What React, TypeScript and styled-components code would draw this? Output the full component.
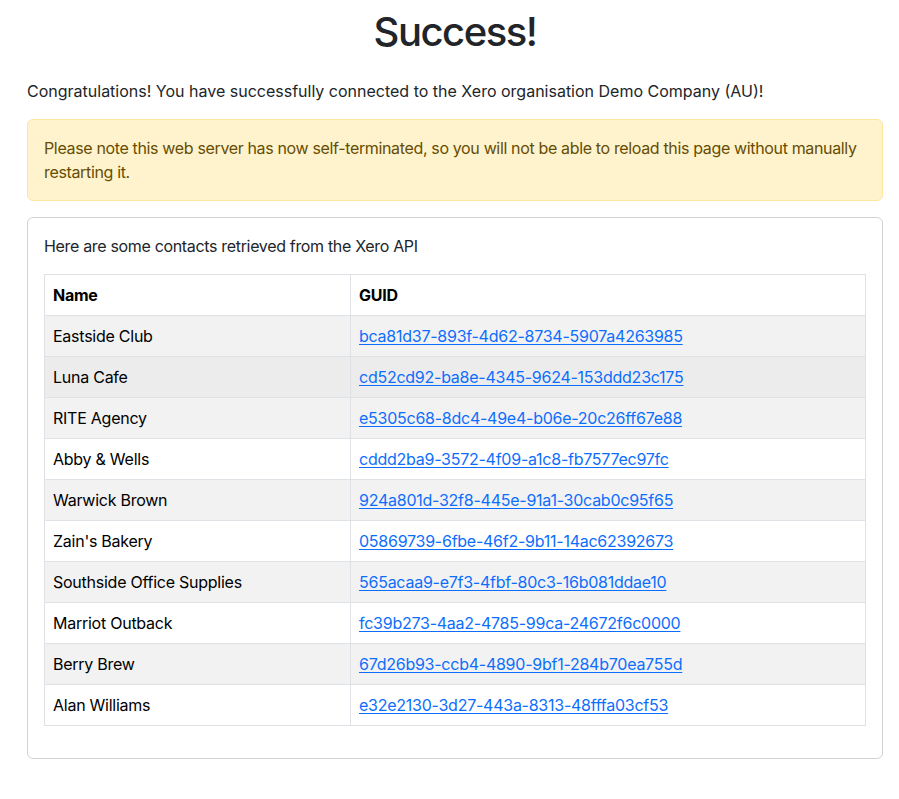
import React from 'react'
import styled, { createGlobalStyle } from 'styled-components'

interface Contact {
  name: string
  guid: string
}

const contacts: Contact[] = [
  { name: 'Eastside Club', guid: 'bca81d37-893f-4d62-8734-5907a4263985' },
  { name: 'Luna Cafe', guid: 'cd52cd92-ba8e-4345-9624-153ddd23c175' },
  { name: 'RITE Agency', guid: 'e5305c68-8dc4-49e4-b06e-20c26ff67e88' },
  { name: 'Abby & Wells', guid: 'cddd2ba9-3572-4f09-a1c8-fb7577ec97fc' },
  { name: 'Warwick Brown', guid: '924a801d-32f8-445e-91a1-30cab0c95f65' },
  { name: "Zain's Bakery", guid: '05869739-6fbe-46f2-9b11-14ac62392673' },
  { name: 'Southside Office Supplies', guid: '565acaa9-e7f3-4fbf-80c3-16b081ddae10' },
  { name: 'Marriot Outback', guid: 'fc39b273-4aa2-4785-99ca-24672f6c0000' },
  { name: 'Berry Brew', guid: '67d26b93-ccb4-4890-9bf1-284b70ea755d' },
  { name: 'Alan Williams', guid: 'e32e2130-3d27-443a-8313-48fffa03cf53' }
]

// the row under the mouse in the screenshot
const HOVERED = 1

const GlobalStyle = createGlobalStyle`
  body {
    margin: 0;
    background: #fff;
    color: #212529;
    font-family: Inter, "Liberation Sans", Arial, sans-serif;
    font-size: 16px;
    line-height: 1.5;
  }
`

const Container = styled.div`
  padding: 0 16px 0 27px;
`

const Title = styled.h1`
  margin: 8px 0 23px;
  font-size: 40px;
  font-weight: 500;
  line-height: 48px;
  letter-spacing: -1.5px;
  text-align: center;
  color: #212529;
`

const Lead = styled.p`
  margin: 0 0 16px;
`

const Alert = styled.div`
  padding: 16px;
  margin-bottom: 16px;
  background: #fff3cd;
  border: 1px solid #ffe69c;
  border-radius: 6px;
  color: #664d03;
  letter-spacing: -0.35px;
`

const Card = styled.div`
  border: 1px solid rgba(0, 0, 0, 0.175);
  border-radius: 6px;
  margin-bottom: 24px;
`

const CardBody = styled.div`
  padding: 16px;
`

const Intro = styled.p`
  margin: 0 0 16px;
  letter-spacing: -0.33px;
`

const Table = styled.table`
  width: 100%;
  margin-bottom: 16px;
  border-collapse: collapse;
  color: #000;
  letter-spacing: -0.25px;
`

const HeadCell = styled.th<{ $width?: number }>`
  width: ${props => (props.$width ? `${props.$width}px` : 'auto')};
  padding: 8px;
  border: 1px solid #dee2e6;
  text-align: left;
  font-weight: 700;
`

const Row = styled.tr<{ $striped: boolean; $hover: boolean }>`
  background: ${props =>
    props.$hover ? '#ececec' : props.$striped ? '#f2f2f2' : '#fff'};
`

const Cell = styled.td`
  padding: 8px;
  border: 1px solid #dee2e6;
`

const Link = styled.a`
  color: #0d6efd;
  text-decoration: underline;
  text-underline-offset: 2px;
`

const App: React.FC = () => {
  return (
    <Container>
      <GlobalStyle />
      <Title>Success!</Title>
      <Lead>
        Congratulations! You have successfully connected to the Xero organisation Demo
        Company (AU)!
      </Lead>
      <Alert>
        Please note this web server has now self-terminated, so you will not be able to
        reload this page without manually restarting it.
      </Alert>
      <Card>
        <CardBody>
          <Intro>Here are some contacts retrieved from the Xero API</Intro>
          <Table>
            <thead>
              <tr>
                <HeadCell $width={289}>Name</HeadCell>
                <HeadCell>GUID</HeadCell>
              </tr>
            </thead>
            <tbody>
              {contacts.map((contact, i) => (
                <Row key={contact.guid} $striped={i % 2 === 0} $hover={i === HOVERED}>
                  <Cell>{contact.name}</Cell>
                  <Cell>
                    <Link href={`#${contact.guid}`}>{contact.guid}</Link>
                  </Cell>
                </Row>
              ))}
            </tbody>
          </Table>
        </CardBody>
      </Card>
    </Container>
  )
}

export default App
